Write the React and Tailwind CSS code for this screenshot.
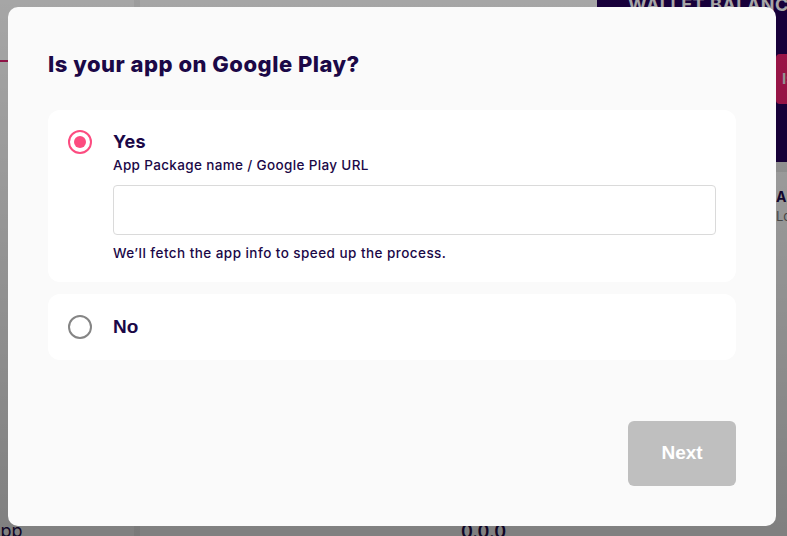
import React, { useState } from 'react';

function Radio({ checked }) {
    return checked ? (
        <span className="flex h-6 w-6 shrink-0 items-center justify-center rounded-full border-2 border-[#fc4c80]">
            <span className="h-3 w-3 rounded-full bg-[#fc4c80]" />
        </span>
    ) : (
        <span className="h-6 w-6 shrink-0 rounded-full border-2 border-[#858585]" />
    );
}

export default function App() {
    const [choice, setChoice] = useState('yes');

    return (
        <div className="relative h-[536px] w-[787px] overflow-hidden bg-white font-['Inter',sans-serif]">
            {/* page behind the dialog */}
            <div className="flex h-full">
                <div className="w-[140px] border-r-[6px] border-[#f2f2f2]">
                    <div className="mt-[60px] h-[2px] w-full bg-[#e0206f]" />
                </div>
                <div className="flex flex-1 flex-col">
                    <div className="flex h-[162px]">
                        <div className="flex-1 border-r-2 border-white" />
                        <div className="w-[190px] bg-[#24005a] pl-[31px]">
                            <div className="-mt-[9px] whitespace-nowrap text-[18px] font-bold tracking-[0.5px] text-white">WALLET BALANCE</div>
                            <div className="mt-[36px] ml-[148px] flex h-[50px] items-center rounded-l bg-[#f0206f] pl-[6px] text-[15px] font-bold whitespace-nowrap text-[#e8e8e8]">Is</div>
                        </div>
                    </div>
                    <div className="h-[10px] bg-[#ececec]" />
                    <div className="flex flex-1 justify-end pt-[14px]">
                        <div className="w-[11px] overflow-hidden whitespace-nowrap">
                            <div className="text-[14px] font-bold text-[#1e0a4c]">App</div>
                            <div className="text-[13px] text-[#777]">Lorem</div>
                        </div>
                    </div>
                </div>
            </div>
            <div className="absolute bottom-[-8px] left-[-12px] text-[18px] text-[#1e0a4c]">App</div>
            <div className="absolute bottom-[-9px] left-[461px] text-[18px] font-semibold text-[#1e0a4c]">0.0.0</div>

            {/* overlay */}
            <div className="absolute inset-0 bg-gradient-to-b from-black/35 to-black/50" />

            {/* dialog */}
            <div className="absolute left-[8px] top-[7px] flex h-[519px] w-[768px] flex-col rounded-[10px] bg-[#fafafa] p-10">
                <h2 className="text-[22px] leading-[34px] font-extrabold tracking-[0.5px] text-[#1b0847]">Is your app on Google Play?</h2>

                <div className="mt-[29px] flex flex-col gap-3">
                    <div
                        className="flex cursor-pointer gap-[21px] rounded-xl bg-white p-5"
                        onClick={() => setChoice('yes')}
                    >
                        <Radio checked={choice === 'yes'} />
                        <div className="flex flex-1 flex-col">
                            <div className="text-[18px] leading-6 font-bold tracking-[0.3px] text-[#1b0847]">Yes</div>
                            <label className="mt-[2px] text-[13.5px] leading-[18px] font-medium tracking-[0.35px] text-[#1b0847]">
                                App Package name / Google Play URL
                            </label>
                            <input
                                type="text"
                                className="mt-[11px] h-[50px] w-full rounded border border-[#dadada] bg-white px-3 text-[14px] outline-none"
                            />
                            <p className="mt-[9px] text-[13.5px] leading-[18px] font-medium tracking-[0.45px] text-[#1b0847]">
                                We’ll fetch the app info to speed up the process.
                            </p>
                        </div>
                    </div>

                    <div
                        className="flex cursor-pointer items-center gap-[21px] rounded-xl bg-white px-5 py-[21px]"
                        onClick={() => setChoice('no')}
                    >
                        <Radio checked={choice === 'no'} />
                        <div className="font-['Liberation_Sans',sans-serif] text-[19px] leading-6 font-bold text-[#1b0847]">No</div>
                    </div>
                </div>

                <div className="mt-auto flex justify-end">
                    <button
                        disabled
                        className="h-[65px] w-[108px] rounded-md bg-[#bfbfbf] font-['Liberation_Sans',sans-serif] text-[19px] font-bold text-white"
                    >
                        Next
                    </button>
                </div>
            </div>
        </div>
    );
}
